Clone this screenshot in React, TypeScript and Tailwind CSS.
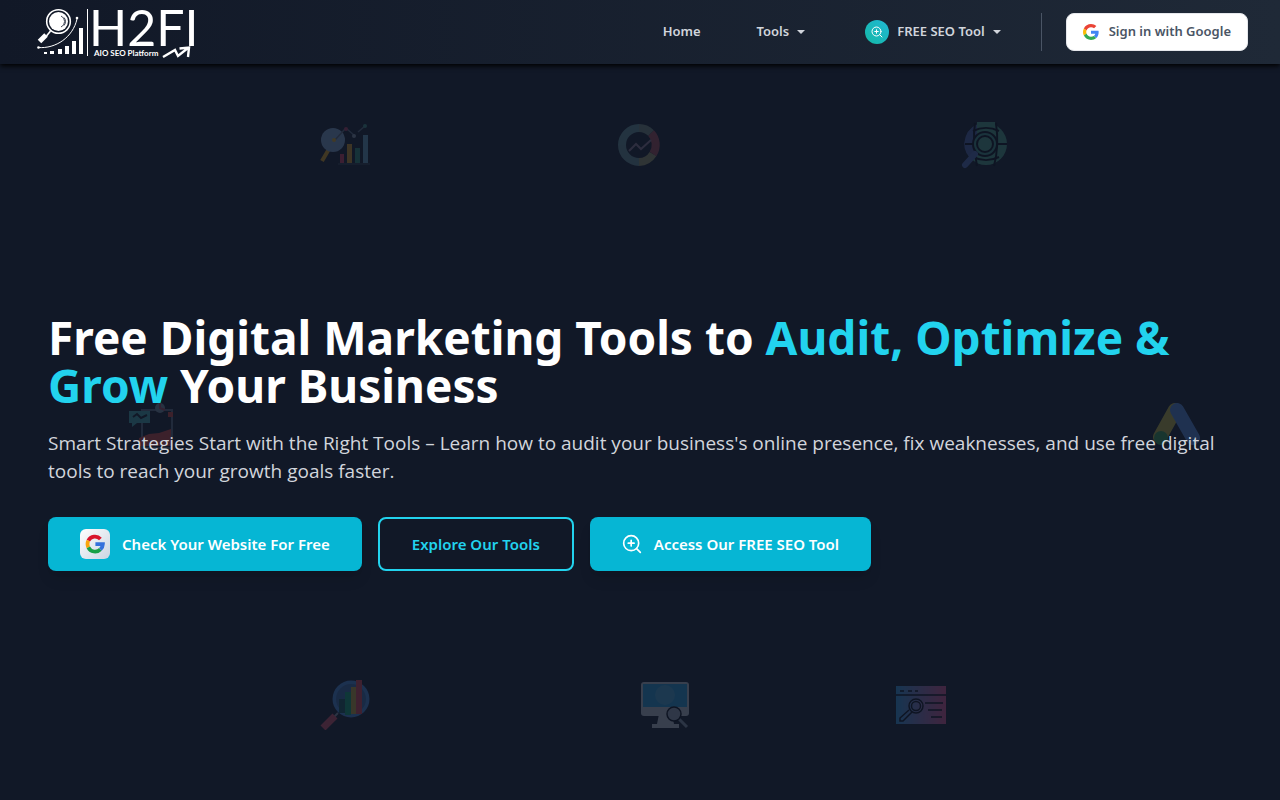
import type { ReactNode } from "react";

const GoogleMark = ({ className }: { className: string }) => (
  <svg viewBox="0 0 48 48" className={className} aria-hidden="true">
    <path fill="#EA4335" d="M24 9.5c3.54 0 6.71 1.22 9.21 3.6l6.85-6.85C35.9 2.38 30.47 0 24 0 14.62 0 6.51 5.38 2.56 13.22l7.98 6.19C12.43 13.72 17.74 9.5 24 9.5z" />
    <path fill="#4285F4" d="M46.98 24.55c0-1.57-.15-3.09-.38-4.55H24v9.02h12.94c-.58 2.96-2.26 5.48-4.78 7.18l7.73 6c4.51-4.18 7.09-10.36 7.09-17.65z" />
    <path fill="#FBBC05" d="M10.53 28.59c-.48-1.45-.76-2.99-.76-4.59s.27-3.14.76-4.59l-7.98-6.19C.92 16.46 0 20.12 0 24c0 3.88.92 7.54 2.56 10.78l7.97-6.19z" />
    <path fill="#34A853" d="M24 48c6.48 0 11.93-2.13 15.89-5.81l-7.73-6c-2.15 1.45-4.92 2.3-8.16 2.3-6.26 0-11.57-4.22-13.47-9.91l-7.98 6.19C6.51 42.62 14.62 48 24 48z" />
  </svg>
);

const GoogleTileMark = ({ className }: { className: string }) => (
  <svg viewBox="0 0 48 48" className={className} fill="none" strokeWidth="9" aria-hidden="true">
    <path stroke="#d9152c" d="M8 16A18 18 0 0 1 37 12" />
    <path stroke="#f9a60c" d="M8 32a18 18 0 0 1 0-16" />
    <path stroke="#17a046" d="M37 37A18 18 0 0 1 8 32" />
    <path stroke="#3471dc" d="M25 24h18a18 18 0 0 1-6 13" />
  </svg>
);

const SeoMark = ({ className }: { className: string }) => (
  <svg viewBox="0 0 24 24" className={className} fill="none" stroke="currentColor" strokeWidth="2" strokeLinecap="round" strokeLinejoin="round" aria-hidden="true">
    <circle cx="11" cy="11" r="9" />
    <path d="M17.5 17.5 22 22M11 7.5v7M7.5 11h7" />
  </svg>
);

const Caret = () => (
  <svg viewBox="0 0 8 4" className="h-1 w-2" fill="currentColor" aria-hidden="true">
    <path d="M0 0h8L4 4z" />
  </svg>
);

const Logo = () => (
  <svg viewBox="0 0 164 56" className="h-14 w-41 overflow-visible" role="img" aria-label="H2FI AIO SEO Platform">
    <g fill="none" stroke="#fff">
      <circle cx="22.500" cy="15.500" r="11.800" strokeWidth="1.600" />
      <circle cx="22.500" cy="15.500" r="9.500" fill="#fff" stroke="none" />
      <path d="M25 10a6 6 0 0 1 0 11M28 11.500a6 6 0 0 1 0 8" stroke="#151d2e" strokeWidth="0.800" />
      <path d="M14.500 25l-4 5" strokeWidth="1.600" />
      <path d="M10 29 3.500 35.500" strokeWidth="5" />
      <path d="M2 41.500C20 43 37 31 41 13" strokeWidth="1" />
      <path d="M51.500 3v47" strokeWidth="1" />
      <path d="M127 51l12-7 3 6L152 42M143.500 42.500l9.500-1-1 9.500" strokeWidth="2.400" />
    </g>
    <g fill="#fff">
      <circle cx="41" cy="12" r="1.300" />
      <circle cx="2.500" cy="41.500" r="1.300" />
      <path d="M8 46h3v2H8zM14 45h4v3h-4zM22 43h4v5h-4zM29 40h4v8h-4zM36 35h4v13h-4zM43 22h4v26h-4z" />
      <text x="53" y="40" fontSize="50" className="font-['Lato',sans-serif]">H2FI</text>
      <text x="58" y="50" fontSize="8" fontWeight="700" className="font-['Lato',sans-serif]">AIO SEO Platform</text>
    </g>
  </svg>
);

const Art = ({ place, children }: { place: string; children: ReactNode }) => (
  <svg viewBox="0 0 50 50" className={`absolute size-12.5 opacity-20 ${place}`}>{children}</svg>
);

const FloatingArt = () => (
  <div className="pointer-events-none absolute inset-0" aria-hidden="true">
    <Art place="left-1/4 top-[15%]">
      <path d="M9 29 2 41" stroke="#f9b418" strokeWidth="4" />
      <circle cx="13" cy="20" r="12" fill="#8bb2df" />
      <path d="M15 20l10-11M27 9l8 7M38 12l7-6" stroke="#64748b" strokeWidth="1.500" />
      <circle cx="14" cy="20" r="2" fill="#fbbf24" />
      <circle cx="26" cy="9" r="2" fill="#c43b63" />
      <circle cx="34" cy="16" r="2" fill="#94a3b8" />
      <circle cx="45" cy="6" r="2" fill="#3e9b8c" />
      <path d="M20 34h4v9h-4z" fill="#e83c60" />
      <path d="M27 24h5v19h-5z" fill="#f3ab20" />
      <path d="M35 28h5v15h-5z" fill="#2e9c7b" />
      <path d="M43 15h5v28h-5z" fill="#6eb0d0" />
      <path d="M18 44h32" stroke="#475569" />
    </Art>
    <Art place="left-[48%] top-[15%]">
      <g fill="none" strokeWidth="8">
        <path d="M25 8A17 17 0 0 0 8 25" stroke="#6b9fa3" />
        <path d="M8 25a17 17 0 0 0 17 17" stroke="#6c989f" />
        <path d="M25 42a17 17 0 0 0 14-8" stroke="#a8a56d" />
        <path d="M39 34a17 17 0 0 0-2-21" stroke="#b74e58" />
        <path d="M37 13A17 17 0 0 0 25 8" stroke="#7f9688" />
        <path d="M15 31l7-7 5 5 10-9" stroke="#9b819c" strokeWidth="2" />
      </g>
    </Art>
    <Art place="left-3/4 top-[15%]">
      <circle cx="26" cy="24" r="21" fill="#4fae8f" />
      <path d="M22 3A21 21 0 0 0 10 38l12-12z" fill="#5068b8" />
      <path d="M17 2h18v18H17z" fill="#4fae8f" />
      <path d="M15 3c-2 14-1 28 2 43M36 3c2 14 2 28-2 43M5 24h42" fill="none" stroke="#050914" strokeWidth="2" />
      <path d="M13 11c8-4 18-4 26 0M13 37c8 4 18 4 26 0" fill="none" stroke="#050914" strokeWidth="2" />
      <circle cx="25" cy="24" r="12" fill="#3f9f90" stroke="#050914" strokeWidth="2" />
      <circle cx="25" cy="24" r="8" fill="#4fae8f" stroke="#050914" strokeWidth="2" />
      <path d="M15 34 5 45" stroke="#5574c8" strokeWidth="6" strokeLinecap="round" />
    </Art>
    <Art place="left-[10%] top-1/2">
      <path d="M14 10h30v38H14z" fill="none" stroke="#64748b" strokeWidth="2" />
      <path d="M1 11h21v12H9l-5 4v-4H1z" fill="#45b8bb" />
      <path d="M5 17l4-3 4 4 6-3" fill="none" stroke="#111827" strokeWidth="2" />
      <circle cx="32" cy="8" r="5" fill="#7f99b0" />
      <path d="M32 3v5l5 2" fill="none" stroke="#b64b60" strokeWidth="2" />
      <path d="M11 38l10-4 10-1 12-4v17H11z" fill="#e8453c" />
      <path d="M40 12h5v5h-5z" fill="#e8453c" />
    </Art>
    <Art place="left-[90%] top-1/2">
      <path d="M23 10 8 37" stroke="#d8c93c" strokeWidth="14" strokeLinecap="round" />
      <path d="M25 10l16 28" stroke="#5a97f5" strokeWidth="14" strokeLinecap="round" />
      <circle cx="9" cy="38" r="7" fill="#34a853" />
    </Art>
    <Art place="left-1/4 top-[85%]">
      <path d="M18 33l-5 5" stroke="#94a3b8" strokeWidth="2" />
      <path d="M15 36 3 48" stroke="#e74f69" strokeWidth="7" />
      <circle cx="31" cy="19" r="18.500" fill="#4a94f0" />
      <circle cx="31" cy="19" r="15" fill="#3a73b8" />
      <path d="M19 19h6v14h-6z" fill="#145a60" />
      <path d="M25 12h6v23h-6z" fill="#0bb27f" />
      <path d="M31 7h5v27h-5z" fill="#d6b53a" />
      <path d="M36 0h6v34h-6z" fill="#f04955" />
    </Art>
    <Art place="left-1/2 top-[85%]">
      <path d="M19 34h13l2 10h5v4H12v-4h5z" fill="#d3dbe6" />
      <rect x="1" y="2" width="48" height="34" rx="3" fill="#d3dbe6" />
      <path d="M3 4h44v23H3z" fill="#20a8ee" />
      <circle cx="25" cy="15" r="10" fill="#49b8f0" />
      <path d="M38 38l9 9" stroke="#94a3b8" strokeWidth="3" />
      <circle cx="34" cy="34" r="7" fill="#a8b5c6" stroke="#050914" strokeWidth="1.500" />
    </Art>
    <Art place="left-[70%] top-[85%]">
      <defs>
        <linearGradient id="browser">
          <stop stopColor="#30a8f8" />
          <stop offset="1" stopColor="#f8559a" />
        </linearGradient>
      </defs>
      <path d="M0 6h50v38H0z" fill="url(#browser)" />
      <g fill="none" stroke="#050914" strokeWidth="1.500">
        <path d="M0 15h50M4 11h4M12 11h4M19 11h3M29 23h18M32 30h14M35 37h11" />
        <circle cx="20" cy="26" r="7" />
        <circle cx="20" cy="26" r="4.500" />
        <path d="M13 30 4 38v3h3l9-9" />
      </g>
    </Art>
  </div>
);

export default function App() {
  return (
    <div className="relative flex min-h-screen flex-col overflow-hidden bg-[#111827] font-['Noto_Sans','Open_Sans',sans-serif] text-white">
      <FloatingArt />
      <header className="relative flex h-16 items-center justify-between bg-linear-to-r from-[#111827] to-[#1f2937] px-8 shadow-[0_2px_5px_#000]">
        <a href="#" className="mt-1 ml-1">
          <Logo />
        </a>
        <nav className="flex items-center text-[13px] font-semibold text-gray-300">
          <a href="#" className="mr-14">Home</a>
          <button type="button" className="mr-15 flex items-center gap-2">
            Tools
            <Caret />
          </button>
          <button type="button" className="mr-10 flex items-center gap-2">
            <span className="flex size-6 items-center justify-center rounded-full bg-linear-to-tr from-[#14b8a6] to-[#22b8d4] text-white">
              <SeoMark className="size-3" />
            </span>
            FREE SEO Tool
            <Caret />
          </button>
          <div className="h-9.5 w-px bg-gray-600" />
          <button type="button" className="ml-6 flex h-9.5 items-center gap-2.5 rounded-lg border border-gray-200 bg-white px-4 text-gray-600">
            <GoogleMark className="size-4" />
            Sign in with Google
          </button>
        </nav>
      </header>
      <main className="relative flex flex-1 flex-col justify-center px-12 pt-5">
        <h1 className="text-[46px] leading-12 font-bold">
          Free Digital Marketing Tools to <span className="text-[#22d3ee]">Audit, Optimize &amp; Grow</span> Your Business
        </h1>
        <p className="mt-5 font-['Open_Sans','Noto_Sans',sans-serif] text-[19px] leading-7 text-gray-300">
          Smart Strategies Start with the Right Tools – Learn how to audit your business's online presence, fix weaknesses, and use free digital tools to reach your growth goals faster.
        </p>
        <div className="mt-8 flex flex-wrap gap-4 text-[15px] font-semibold">
          <button type="button" className="flex h-13.5 items-center gap-3 rounded-lg bg-[#06b6d4] px-8 shadow-lg">
            <span className="flex size-7.5 items-center justify-center rounded-md bg-linear-to-br from-white to-[#cbd5e1]">
              <GoogleTileMark className="size-5" />
            </span>
            Check Your Website For Free
          </button>
          <button type="button" className="h-13.5 rounded-lg border-2 border-[#22d3ee] px-8 text-[#22d3ee]">
            Explore Our Tools
          </button>
          <button type="button" className="flex h-13.5 items-center gap-3 rounded-lg bg-[#06b6d4] px-8 shadow-lg">
            <SeoMark className="size-5" />
            Access Our FREE SEO Tool
          </button>
        </div>
      </main>
    </div>
  );
}
